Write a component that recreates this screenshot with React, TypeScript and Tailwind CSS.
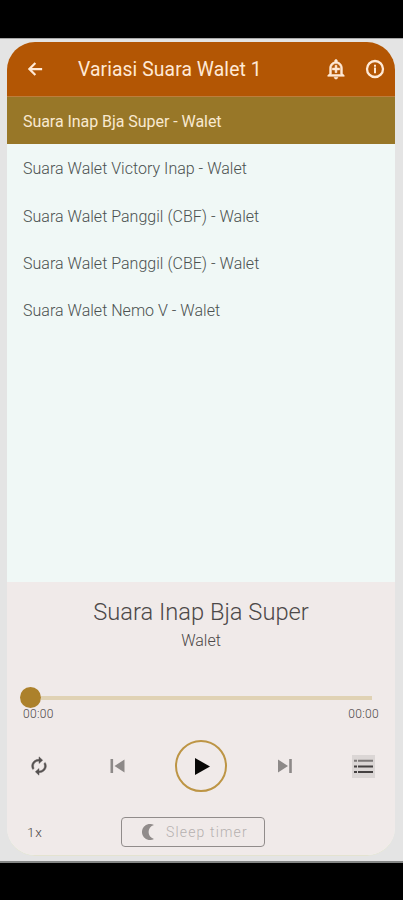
import { MdOutlineAddAlert } from 'react-icons/md';

const tracks = [
  'Suara Walet Victory Inap - Walet',
  'Suara Walet Panggil (CBF) - Walet',
  'Suara Walet Panggil (CBE) - Walet',
  'Suara Walet Nemo V - Walet',
];

function Header() {
  return (
    <header className="flex h-[54px] shrink-0 items-center bg-[#b35604] pr-[9px] pl-[19px] text-[#ffe9d6]">
      <button aria-label="Back" className="shrink-0">
        <svg className="block size-[18px]" viewBox="0 0 24 24" fill="none" stroke="currentColor" strokeWidth="3">
          <path d="M21.5 12H4.5M12.5 4 4.5 12l8 8" />
        </svg>
      </button>
      <h1 className="ml-[34px] flex-1 pt-px text-[19.3px] leading-[24px] tracking-[0.1px] whitespace-nowrap">Variasi Suara Walet 1</h1>
      <button aria-label="Add alert" className="mr-[18px]">
        <MdOutlineAddAlert className="block size-[22px] stroke-[#ffe9d6] stroke-[0.6]" />
      </button>
      <button aria-label="Information" className="mr-px">
        <svg className="block size-[20px]" viewBox="0 0 20 20" fill="none" stroke="currentColor">
          <circle cx="10" cy="10" r="8" strokeWidth="2.3" />
          <path d="M10 5.8v2M10 8.5v5.7" strokeWidth="2" />
        </svg>
      </button>
    </header>
  );
}

function Player() {
  return (
    <section className="flex h-[273px] shrink-0 flex-col bg-[#f0eae9] text-[#4c4848]">
      <h2 className="mt-[16px] text-center text-[23.7px] leading-[28px] font-light whitespace-nowrap">Suara Inap Bja Super</h2>
      <p className="mt-[2px] text-center text-[16px] leading-[26px] font-light">Walet</p>
      <div className="mt-[33px] mr-[23px] ml-[13px] flex h-[21px] items-center">
        <div className="size-[21px] rounded-full bg-[#ac812b]" />
        <div className="h-[4px] flex-1 bg-[#e0d2b4]" />
      </div>
      <div className="mr-[16px] ml-[16px] flex h-[12px] justify-between text-[12px] leading-[13px] font-light tracking-[0.3px]">
        <span>00:00</span>
        <span>00:00</span>
      </div>
      <div className="mt-[20px] flex h-[52px] items-center pl-[21px]">
        <svg className="h-[20px] w-[22px]" viewBox="0 0 24 24" preserveAspectRatio="none" fill="#555150" stroke="#555150" strokeWidth="0.5">
          <path d="M12 6v3l4-4-4-4v3c-4.42 0-8 3.58-8 8 0 1.57.46 3.03 1.24 4.26L6.7 14.8c-.45-.83-.7-1.79-.7-2.8 0-3.31 2.69-6 6-6zm6.76 1.74L17.3 9.2c.44.84.7 1.79.7 2.8 0 3.31-2.69 6-6 6v-3l-4 4 4 4v-3c4.42 0 8-3.58 8-8 0-1.57-.46-3.03-1.24-4.26z" />
        </svg>
        <svg className="ml-[60px] h-[14px] w-[15px]" viewBox="0 0 15 14" fill="#8d8988">
          <path d="M.5 0h2.6v14H.5zM14.5 .5v13L4.5 7z" />
        </svg>
        <button aria-label="Play" className="ml-[50px] flex size-[52px] items-center justify-center rounded-full border-2 border-[#bd9545]">
          <svg className="ml-[2px] h-[17px] w-[15px]" viewBox="0 0 15 17" fill="#080706">
            <path d="M0 0v17l15-8.5z" />
          </svg>
        </button>
        <svg className="ml-[51px] h-[14px] w-[15px]" viewBox="0 0 15 14" fill="#8d8988">
          <path d="M0 .5v13L10 7zM11.2 0h2.6v14h-2.6z" />
        </svg>
        <div className="ml-[59px] flex h-[23px] w-[23px] items-center justify-center bg-[#dbd6d5]">
          <svg className="h-[15px] w-[19px]" viewBox="0 0 19 15" fill="none">
            <path d="M0 1.8h3m1 0h15" stroke="#7c7877" strokeWidth="2" />
            <path d="M0 7.5h3m1 0h15M0 13h3m1 0h15" stroke="#454141" strokeWidth="2" />
          </svg>
        </div>
      </div>
      <div className="mt-[25px] flex h-[30px] items-center pl-[20px]">
        <span className="w-[94px] text-[13.5px] font-light tracking-[0.8px]">1x</span>
        <button className="flex h-[30px] w-[144px] items-center rounded-[4px] border-[1.5px] border-[#918c8b] pl-[20px] text-[14px] text-[#b5b0af]">
          <svg className="h-[16px] w-[12px] shrink-0" viewBox="0 0 12 16" fill="#918c8b">
            <path d="M12 1.1A8 8 0 1 0 12 14.9C4.8 13 4.8 3 12 1.1z" />
          </svg>
          <span className="ml-[12px] font-light tracking-[1.15px] whitespace-nowrap">Sleep timer</span>
        </button>
      </div>
    </section>
  );
}

export default function App() {
  return (
    <div className="flex h-[900px] w-[403px] flex-col overflow-hidden bg-black pt-[38px] font-['Roboto',sans-serif]">
      <div className="h-[825px] border-t border-b-2 border-t-[#a7a7a7] border-b-[#858786] bg-[#e4e4e4] pt-[3px] pr-[8px] pl-[7px]">
        <main className="flex h-[814px] flex-col overflow-hidden rounded-[28px] border-b border-[#e4e3d0] bg-[#f0f8f6]">
          <Header />
          <ul className="flex flex-1 flex-col text-[16px] font-light text-[#4b5150]">
            <li className="flex h-[48px] items-center border-t border-[#bd7d3d] bg-[#987728] pt-[2px] pl-[16px] font-normal tracking-[-0.05px] text-[#f8e9d0]">
              Suara Inap Bja Super - Walet
            </li>
            {tracks.map((track) => (
              <li key={track} className="flex h-[47.4px] items-center pt-[3px] pl-[16px] tracking-[0.02px] whitespace-nowrap">
                {track}
              </li>
            ))}
          </ul>
          <Player />
        </main>
      </div>
    </div>
  );
}
